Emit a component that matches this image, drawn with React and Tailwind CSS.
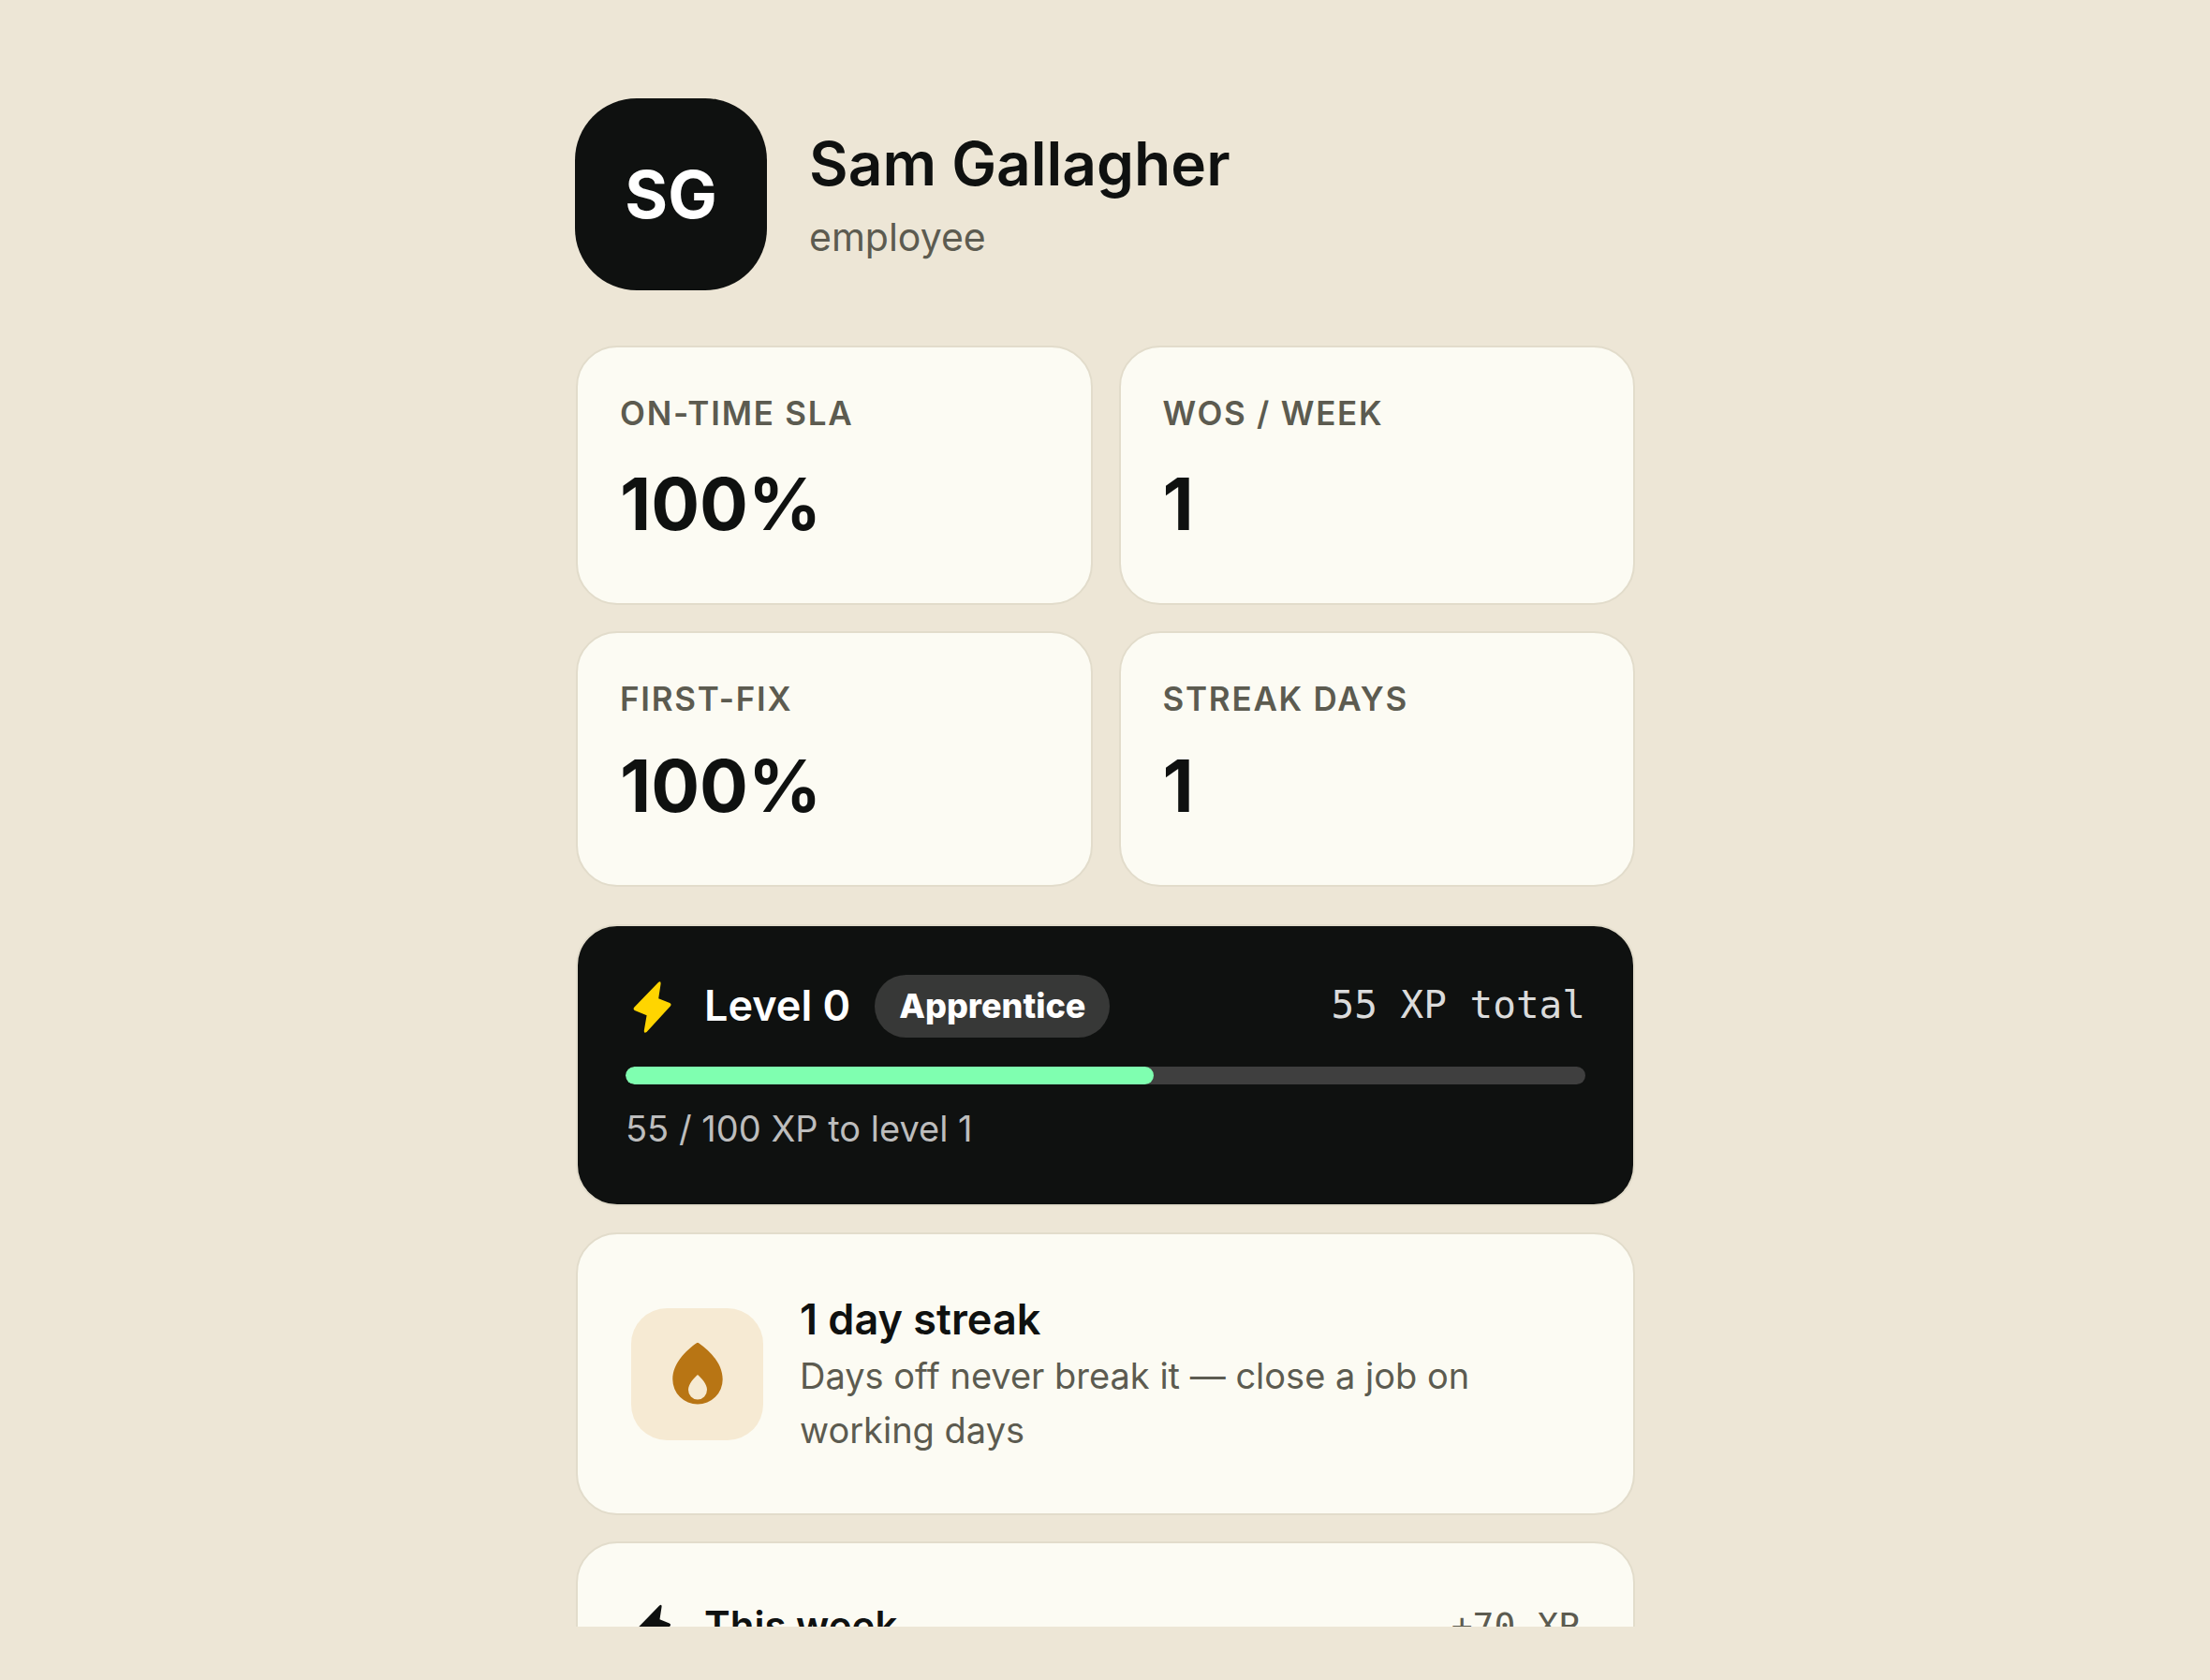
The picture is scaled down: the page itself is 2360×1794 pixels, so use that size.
const STATS = [
  { label: 'On-time SLA', value: '100%' },
  { label: 'WOs / week', value: '1' },
  { label: 'First-fix', value: '100%' },
  { label: 'Streak days', value: '1' },
]

const CARD = 'rounded-[44px] border-2 border-[#e2dccb]'

function BoltIcon({ className }) {
  return (
    <svg viewBox="0 0 60 60" fill="currentColor" className={className} aria-hidden="true">
      <path d="M34.8 5.2Q37.8 2.8 37.6 6.6L35.2 22.2 47.2 27Q49.6 28.4 47.8 30.6L22.6 58Q19.4 60 19.8 56.4L22.6 40.2 9.8 35Q7.6 33.6 9.4 31.4Z" />
    </svg>
  )
}

function FlameIcon({ className }) {
  return (
    <svg viewBox="0 0 80 80" fill="currentColor" fillRule="evenodd" className={className} aria-hidden="true">
      <path d="M38.8 7.2Q40 6.2 41.2 7.2C53 15.5 66.7 29 66.7 46A26.7 26.5 0 0 1 13.3 46C13.3 29 27 15.5 38.8 7.2ZM40 41C36 44.5 30 51 30 57A10 10.5 0 0 0 50 57C50 51 44 44.5 40 41Z" />
    </svg>
  )
}

function StatCard({ label, value }) {
  return (
    <div className={`${CARD} flex flex-col justify-between bg-[#fcfbf3] px-[45px] pt-12 pb-[58px]`}>
      <div className="text-[35px] leading-[44px] font-semibold tracking-wider text-[#5c5b50] uppercase">{label}</div>
      <div className="text-[77px] leading-[96px] font-bold">{value}</div>
    </div>
  )
}

function LevelCard({ level, rank, xp, goal }) {
  return (
    <section className={`${CARD} bg-[#0f1110] px-[51px] pt-[51px] pb-[52px] text-white`}>
      <div className="flex items-center justify-between">
        <div className="flex items-center">
          <BoltIcon className="h-[60px] w-[60px] text-[#ffd500]" />
          <h2 className="ml-6 text-[45px] leading-[68px] font-semibold">Level {level}</h2>
          <span className="ml-[26px] rounded-full bg-[#373837] px-[26px] text-[36px] leading-[67px] font-extrabold">{rank}</span>
        </div>
        <span className="font-['DejaVu_Sans_Mono',monospace] text-[41px] text-[#dbdbdb]">{xp} XP total</span>
      </div>
      <div className="mt-[31px] h-[19px] overflow-hidden rounded-full bg-[#3f3f3f]">
        <div className="h-full rounded-full bg-[#7fffb0]" style={{ width: `${(xp / goal) * 100}%` }} />
      </div>
      <p className="mt-[18px] text-[38px] leading-[58px] text-[#bdbdbd]">
        {xp} / {goal} XP to level {level + 1}
      </p>
    </section>
  )
}

function StreakCard({ days }) {
  return (
    <section className={`${CARD} flex items-center gap-[39px] bg-[#fcfbf3] px-[57px] py-[60px]`}>
      <div className="flex h-[141px] w-[141px] shrink-0 items-center justify-center rounded-[38px] bg-[#f6ead3]">
        <FlameIcon className="h-20 w-20 text-[#b87514]" />
      </div>
      <div>
        <h2 className="text-[45px] leading-[62px] font-semibold">{days} day streak</h2>
        <p className="text-[38px] leading-[58px] text-[#5c5b50]">Days off never break it — close a job on working days</p>
      </div>
    </section>
  )
}

function WeekCard({ xp }) {
  return (
    <section className={`${CARD} flex items-center justify-between bg-[#fcfbf3] px-[57px] py-[54px]`}>
      <div className="flex items-center gap-[26px]">
        <BoltIcon className="h-[52px] w-[52px]" />
        <h2 className="text-[42px] leading-[68px] font-semibold">This week</h2>
      </div>
      <span className="font-['DejaVu_Sans_Mono',monospace] text-[38px] text-[#5c5b50]">+{xp} XP</span>
    </section>
  )
}

export default function App() {
  return (
    <div className="h-screen bg-[#ede6d6] pb-[57px] font-['Inter',sans-serif] text-[#0f1110]">
      <main className="h-full overflow-hidden pt-[105px]">
        <div className="mx-auto w-full max-w-[1132px]">
          <header className="flex items-center gap-[45px]">
            <div className="flex h-[205px] w-[205px] shrink-0 items-center justify-center rounded-[66px] bg-[#0f1110] text-[70px] font-bold text-white">
              SG
            </div>
            <div className="pt-1">
              <h1 className="text-[64px] leading-[80px] font-semibold">Sam Gallagher</h1>
              <p className="mt-1.5 text-[41px] leading-[64px] text-[#5c5b50]">employee</p>
            </div>
          </header>

          <div className="mt-[59px] grid grid-cols-2 grid-rows-[277px_273px] gap-7 pl-px">
            {STATS.map((stat) => (
              <StatCard key={stat.label} {...stat} />
            ))}
          </div>

          <div className="mt-10 flex flex-col gap-7 pl-px">
            <LevelCard level={0} rank="Apprentice" xp={55} goal={100} />
            <StreakCard days={1} />
            <WeekCard xp={70} />
          </div>
        </div>
      </main>
    </div>
  )
}
